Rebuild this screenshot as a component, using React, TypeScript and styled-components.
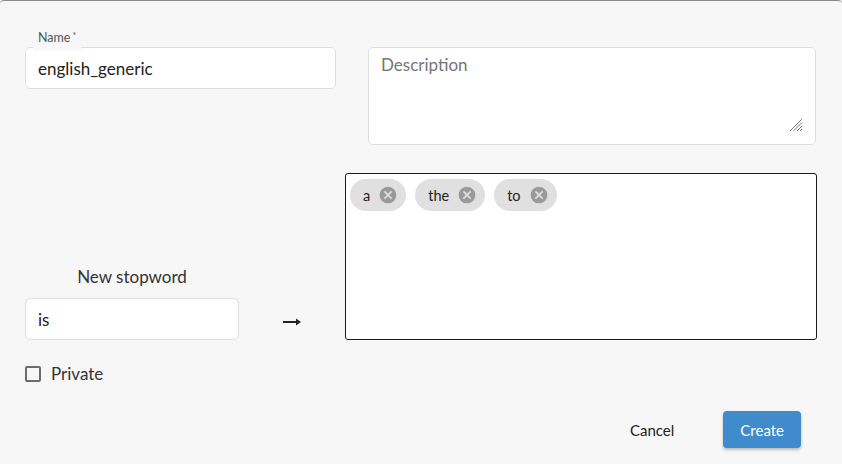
import React, { useState } from "react";
import styled, { createGlobalStyle } from "styled-components";

const GlobalStyle = createGlobalStyle`
  html, body {
    margin: 0;
    padding: 0;
    background: #f7f7f7;
    font-family: Lato, "Open Sans", "Liberation Sans", sans-serif;
  }
`;

const Dialog = styled.div`
  box-sizing: border-box;
  width: 842px;
  height: 464px;
  background: #f7f7f7;
  border-top: 1px solid #8a8a8a;
  border-radius: 4px 4px 0 0;
  padding: 46px 25px 0 25px;
  display: flex;
  flex-direction: column;
`;

const TopRow = styled.div`
  display: grid;
  grid-template-columns: 311px 448px;
  column-gap: 32px;
  align-items: start;
`;

const Field = styled.div`
  position: relative;
`;

const FloatLabel = styled.label`
  position: absolute;
  left: 8px;
  top: -19px;
  padding: 0 5px 2px 5px;
  background: #f7f7f7;
  font-size: 12.5px;
  line-height: 20px;
  color: #555;
  sup {
    font-size: 9px;
    margin-left: 2px;
    vertical-align: 3px;
    line-height: 0;
  }
`;

const TextInput = styled.input<{ $w: number }>`
  box-sizing: border-box;
  width: ${(p) => p.$w}px;
  height: 42px;
  padding: 0 12px;
  border: 1px solid #dedede;
  border-radius: 5px;
  background: #fff;
  font-family: inherit;
  font-size: 17px;
  color: #222;
  outline: none;
`;

const AreaWrap = styled.div`
  position: relative;
  width: 448px;
  height: 98px;
`;

const TextArea = styled.textarea`
  box-sizing: border-box;
  width: 448px;
  height: 98px;
  padding: 7px 12px;
  border: 1px solid #dedede;
  border-radius: 5px;
  background: #fff;
  font-family: inherit;
  font-size: 17px;
  line-height: 20px;
  color: #222;
  outline: none;
  resize: none;
  &::placeholder {
    color: #757575;
  }
`;

const Grip = styled.svg`
  position: absolute;
  right: 13px;
  bottom: 13px;
  pointer-events: none;
`;

const WordRow = styled.div`
  margin-top: 28px;
  display: flex;
  align-items: flex-end;
`;

const NewWord = styled.div`
  display: flex;
  flex-direction: column;
  align-items: center;
  width: 214px;
`;

const NewWordLabel = styled.div`
  font-size: 17px;
  line-height: 20px;
  color: #333;
  margin-bottom: 11px;
`;

const ArrowCell = styled.div`
  width: 106px;
  height: 42px;
  display: flex;
  align-items: center;
  justify-content: center;
  padding-top: 6px;
  box-sizing: border-box;
`;

const WordBox = styled.div`
  box-sizing: border-box;
  width: 472px;
  height: 167px;
  border: 1px solid #1a1a1a;
  border-radius: 3px;
  background: #fff;
  padding: 5px 4px;
  display: flex;
  flex-wrap: wrap;
  align-content: flex-start;
  gap: 9px;
`;

const Chip = styled.div`
  height: 32px;
  border-radius: 16px;
  background: #e0e0e0;
  display: inline-flex;
  align-items: center;
  padding: 0 8px 0 13px;
  font-size: 14.5px;
  color: #222;
`;

const ChipLabel = styled.span`
  margin-right: 8px;
`;

const ChipDelete = styled.svg`
  width: 20px;
  height: 20px;
  fill: #9a9a9a;
  cursor: pointer;
`;

const CheckRow = styled.label`
  margin-top: 24px;
  display: flex;
  align-items: center;
  gap: 10px;
  font-size: 17px;
  line-height: 20px;
  color: #333;
`;

const CheckBox = styled.span`
  box-sizing: border-box;
  width: 16px;
  height: 16px;
  border: 2px solid #6b6b6b;
  border-radius: 2px;
`;

const Footer = styled.div`
  margin-top: 27px;
  padding-right: 16px;
  display: flex;
  justify-content: flex-end;
  align-items: center;
  gap: 32px;
`;

const Button = styled.button<{ $primary?: boolean }>`
  height: 37px;
  padding: 0 17px;
  border: none;
  border-radius: 4px;
  font-family: inherit;
  font-size: 15px;
  cursor: pointer;
  background: ${(p) => (p.$primary ? "#408bcc" : "transparent")};
  color: ${(p) => (p.$primary ? "#fff" : "#222")};
  box-shadow: ${(p) => (p.$primary ? "0 2px 3px rgba(0,0,0,0.25)" : "none")};
`;

const CancelIcon = () => (
  <ChipDelete viewBox="0 0 24 24">
    <path d="M12 2C6.47 2 2 6.47 2 12s4.47 10 10 10 10-4.47 10-10S17.53 2 12 2zm5 13.59L15.59 17 12 13.41 8.41 17 7 15.59 10.59 12 7 8.41 8.41 7 12 10.59 15.59 7 17 8.41 13.41 12 17 15.59z" />
  </ChipDelete>
);

export default function App() {
  const [name, setName] = useState("english_generic");
  const [word, setWord] = useState("is");
  const words = ["a", "the", "to"];

  return (
    <>
      <GlobalStyle />
      <Dialog>
        <TopRow>
          <Field>
            <FloatLabel>
              Name<sup>*</sup>
            </FloatLabel>
            <TextInput $w={311} value={name} onChange={(e) => setName(e.target.value)} />
          </Field>
          <AreaWrap>
            <TextArea placeholder="Description" />
            <Grip width="14" height="14" viewBox="0 0 14 14">
              <g stroke="#777" strokeWidth="1">
                <path d="M1 13L13 1" />
                <path d="M4.5 13L13 4.5" />
                <path d="M8 13L13 8" />
                <path d="M11 13L13 11" />
              </g>
            </Grip>
          </AreaWrap>
        </TopRow>

        <WordRow>
          <NewWord>
            <NewWordLabel>New stopword</NewWordLabel>
            <TextInput $w={214} value={word} onChange={(e) => setWord(e.target.value)} />
          </NewWord>
          <ArrowCell>
            <svg width="18" height="8" viewBox="0 0 18 8">
              <path d="M0 4h14" stroke="#222" strokeWidth="2" />
              <path d="M13 0.5L18 4L13 7.5z" fill="#222" />
            </svg>
          </ArrowCell>
          <WordBox>
            {words.map((w) => (
              <Chip key={w}>
                <ChipLabel>{w}</ChipLabel>
                <CancelIcon />
              </Chip>
            ))}
          </WordBox>
        </WordRow>

        <CheckRow>
          <CheckBox />
          Private
        </CheckRow>

        <Footer>
          <Button>Cancel</Button>
          <Button $primary>Create</Button>
        </Footer>
      </Dialog>
    </>
  );
}
